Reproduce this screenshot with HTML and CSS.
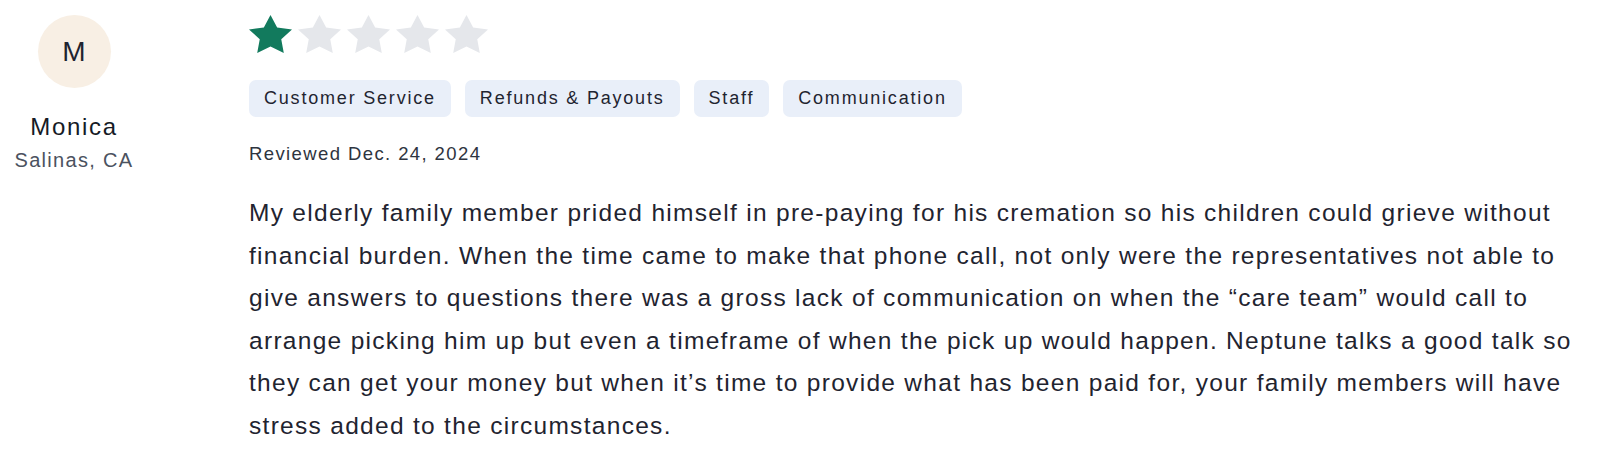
FILE: index.html
```html
<!DOCTYPE html>
<html lang="en">
<head>
<meta charset="utf-8">
<title>Review</title>
<link rel="stylesheet" href="styles.css">
</head>
<body>
<article class="review">
  <aside class="author">
    <div class="avatar">M</div>
    <div class="name">Monica</div>
    <div class="location">Salinas, CA</div>
  </aside>
  <div class="main">
    <div class="stars" aria-label="1 out of 5 stars">
      <svg class="star on" viewBox="2 2 20 19.02" preserveAspectRatio="none"><polygon points="12 2 15.09 8.26 22 9.27 17 14.14 18.18 21.02 12 17.77 5.82 21.02 7 14.14 2 9.27 8.91 8.26"/></svg>
      <svg class="star" viewBox="2 2 20 19.02" preserveAspectRatio="none"><polygon points="12 2 15.09 8.26 22 9.27 17 14.14 18.18 21.02 12 17.77 5.82 21.02 7 14.14 2 9.27 8.91 8.26"/></svg>
      <svg class="star" viewBox="2 2 20 19.02" preserveAspectRatio="none"><polygon points="12 2 15.09 8.26 22 9.27 17 14.14 18.18 21.02 12 17.77 5.82 21.02 7 14.14 2 9.27 8.91 8.26"/></svg>
      <svg class="star" viewBox="2 2 20 19.02" preserveAspectRatio="none"><polygon points="12 2 15.09 8.26 22 9.27 17 14.14 18.18 21.02 12 17.77 5.82 21.02 7 14.14 2 9.27 8.91 8.26"/></svg>
      <svg class="star" viewBox="2 2 20 19.02" preserveAspectRatio="none"><polygon points="12 2 15.09 8.26 22 9.27 17 14.14 18.18 21.02 12 17.77 5.82 21.02 7 14.14 2 9.27 8.91 8.26"/></svg>
    </div>
    <ul class="tags">
      <li class="tag">Customer Service</li>
      <li class="tag">Refunds &amp; Payouts</li>
      <li class="tag">Staff</li>
      <li class="tag">Communication</li>
    </ul>
    <div class="date">Reviewed Dec. 24, 2024</div>
    <p class="text">My elderly family member prided himself in pre-paying for his cremation so his children could grieve without financial burden. When the time came to make that phone call, not only were the representatives not able to give answers to questions there was a gross lack of communication on when the “care team” would call to arrange picking him up but even a timeframe of when the pick up would happen. Neptune talks a good talk so they can get your money but when it’s time to provide what has been paid for, your family members will have stress added to the circumstances.</p>
  </div>
</article>
</body>
</html>
```
FILE: styles.css
```css
html, body {
  margin: 0;
  padding: 0;
  background: #ffffff;
}
body {
  font-family: "Liberation Sans", Arial, sans-serif;
  color: #1f2430;
}
.review {
  display: flex;
  gap: 101px;
  padding: 0 12px 0 0;
}
.author {
  width: 148px;
  flex: none;
  display: flex;
  flex-direction: column;
  align-items: center;
}
.avatar {
  width: 73px;
  height: 73px;
  margin-top: 15px;
  border-radius: 50%;
  background: #f8efe4;
  display: flex;
  align-items: center;
  justify-content: center;
  font-size: 28px;
  color: #1f2430;
}
.name {
  margin-top: 23px;
  font-size: 24px;
  line-height: 32px;
  letter-spacing: 1.66px;
  color: #161b26;
}
.location {
  margin-top: 3px;
  font-size: 20px;
  line-height: 28px;
  letter-spacing: 1.32px;
  color: #4b5260;
}
.main {
  flex: 1;
  min-width: 0;
}
.stars {
  display: flex;
  gap: 6px;
  margin-top: 15px;
  height: 38px;
}
.star {
  width: 43px;
  height: 38px;
  fill: #e5e7eb;
}
.star.on {
  fill: #127a5d;
}
.tags {
  display: flex;
  gap: 14px;
  list-style: none;
  margin: 27px 0 0;
  padding: 0;
}
.tag {
  height: 37px;
  line-height: 37px;
  padding: 0 15px;
  border-radius: 7px;
  background: #e9eff9;
  font-size: 18px;
  letter-spacing: 1.8px;
  color: #1f2430;
}
.date {
  margin-top: 25px;
  font-size: 18.5px;
  line-height: 24px;
  letter-spacing: 1.4px;
  color: #2e3440;
}
.text {
  margin: 26px 0 0;
  font-size: 24.5px;
  line-height: 42.6px;
  letter-spacing: 1.3px;
  color: #1f2430;
}
```
